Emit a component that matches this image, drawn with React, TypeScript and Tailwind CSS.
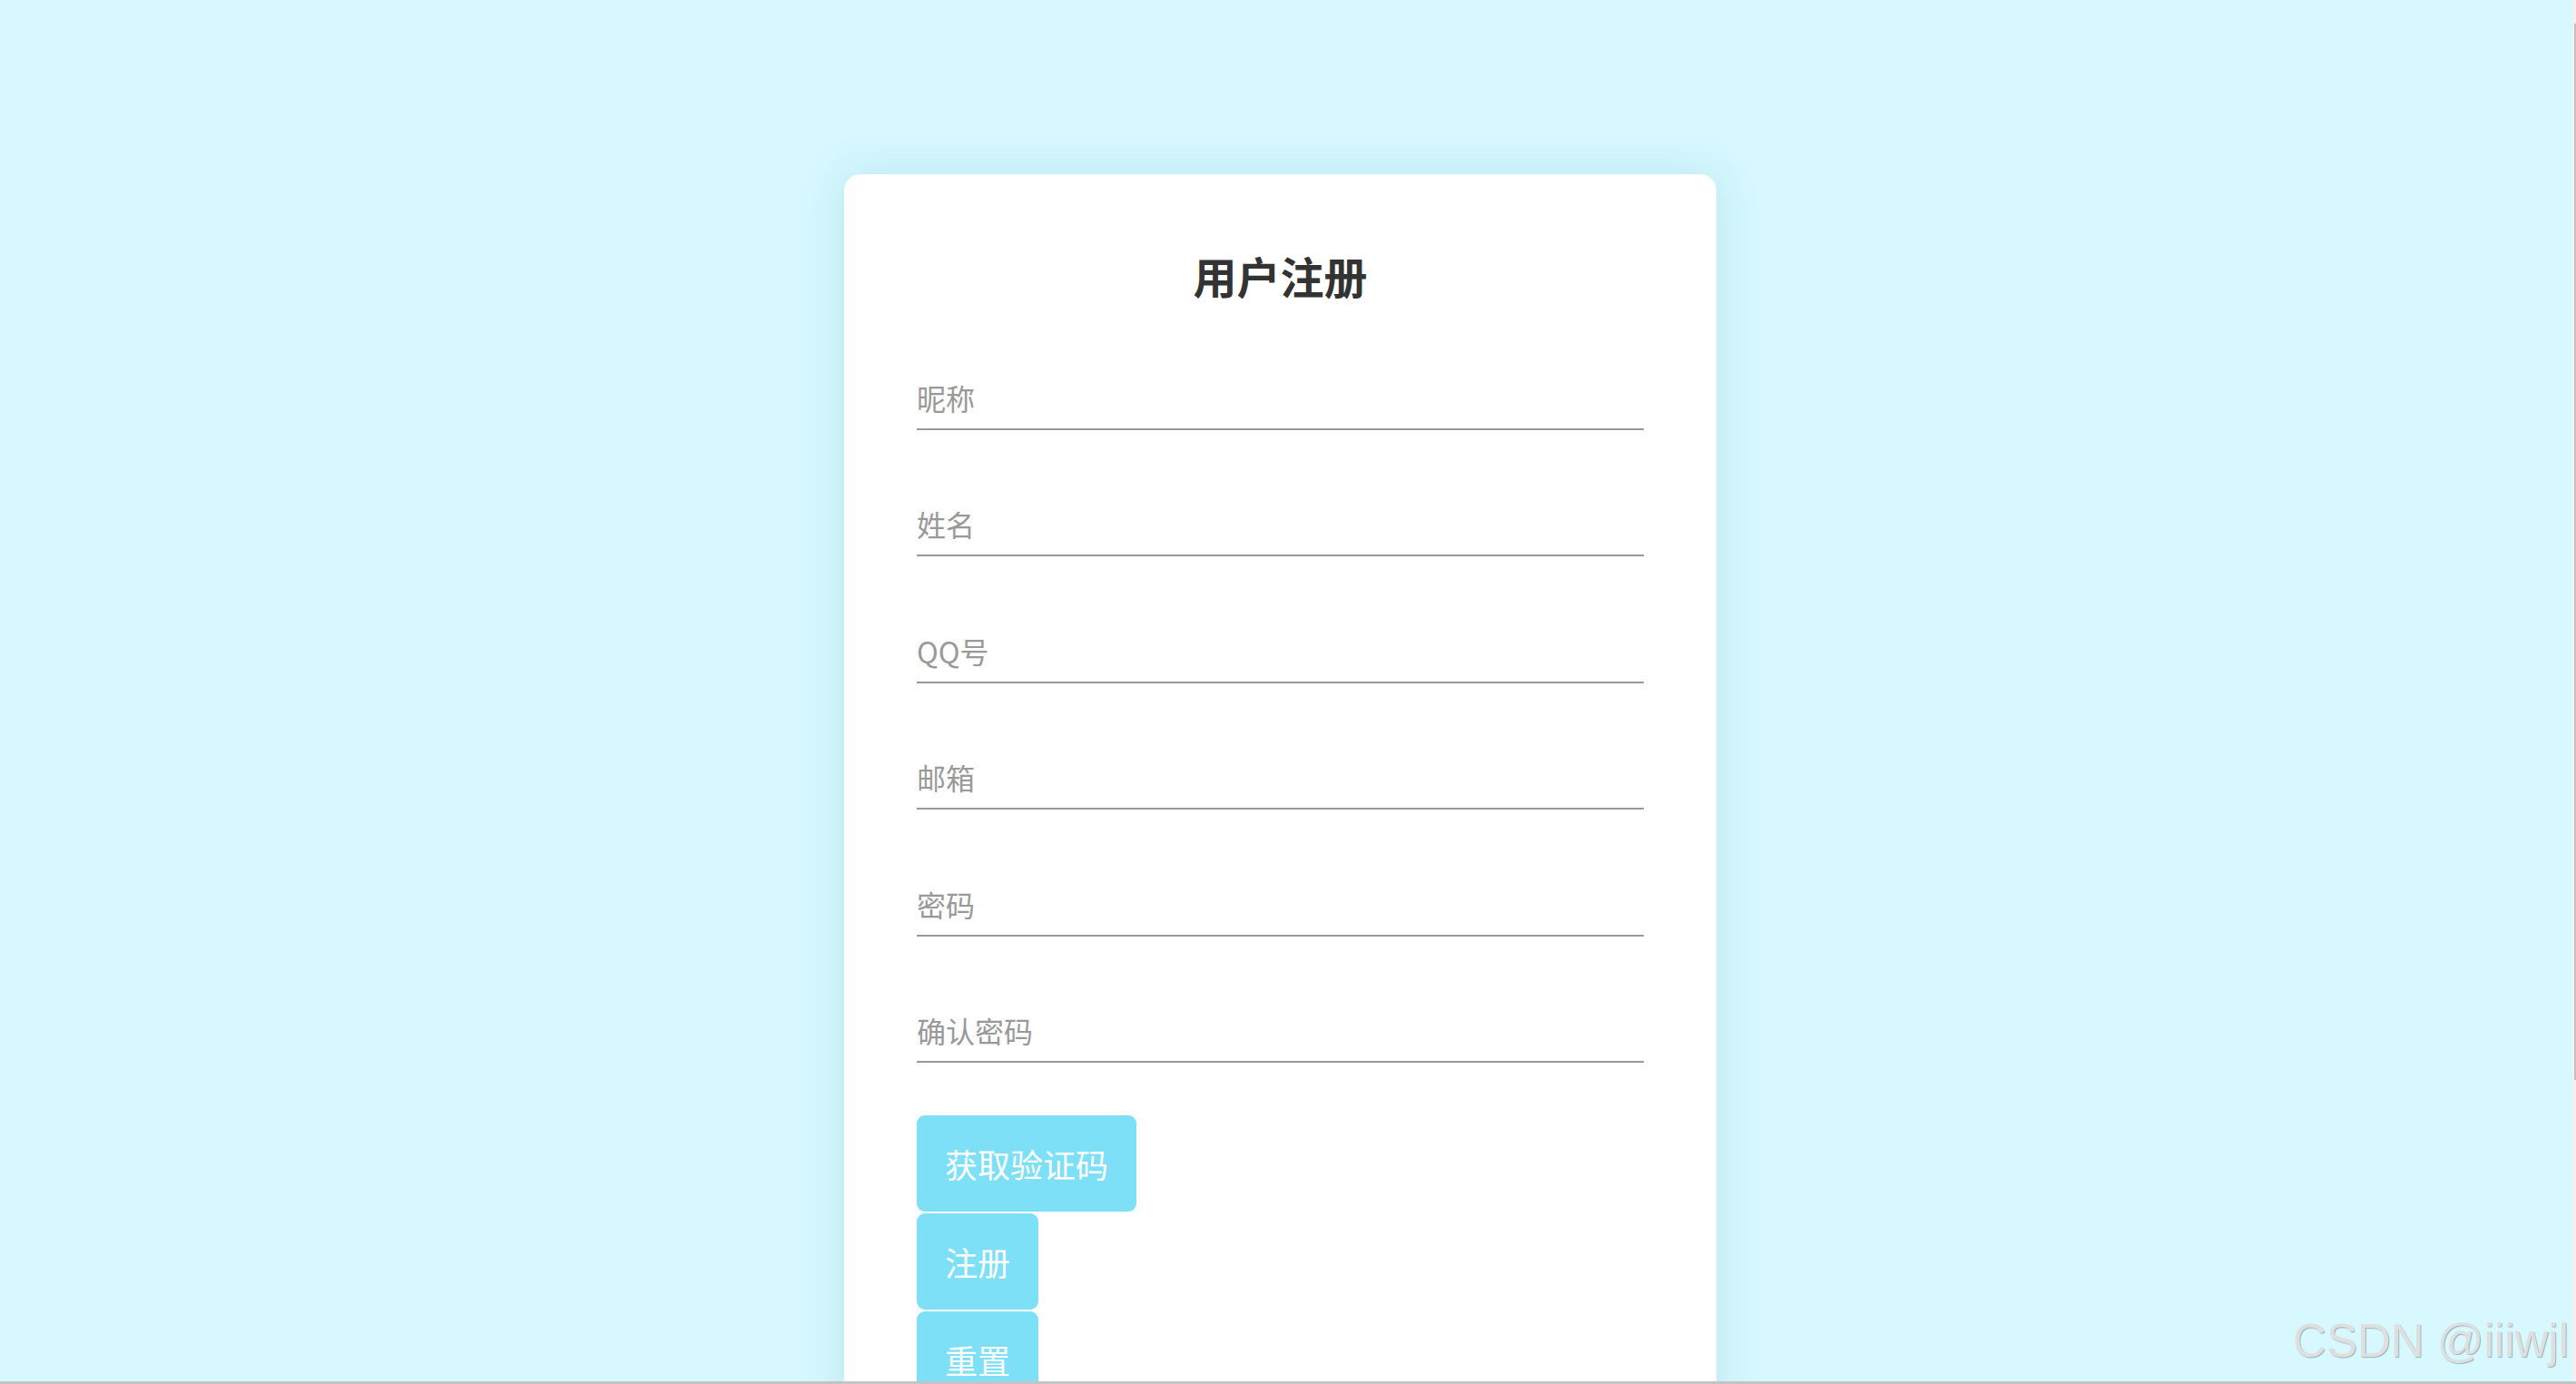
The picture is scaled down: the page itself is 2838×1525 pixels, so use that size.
import React from 'react';

const fields = ['昵称', '姓名', 'QQ号', '邮箱', '密码', '确认密码'];

const cjk = { fontFamily: '"Noto Sans CJK SC", "Noto Sans", sans-serif' };

export default function App() {
  return (
    <div className="relative flex h-screen w-full flex-col overflow-hidden bg-[#d6f8fe]" style={cjk}>
      <div className="flex min-h-0 flex-1">
        {/* page area */}
        <div className="flex min-w-0 flex-1 justify-center overflow-hidden pr-[13px] pt-[192px]">
          <div className="flex h-[1600px] w-[961px] shrink-0 flex-col rounded-[18px] bg-white px-[80px] pt-[75px] shadow-[0_0_50px_rgba(0,110,130,0.13)]">
            <h1 className="text-center text-[48px] font-bold leading-[72px] text-[#333]">用户注册</h1>

            <div className="mt-[67px] flex flex-col gap-[71.4px]">
              {fields.map(f => (
                <input
                  key={f}
                  type={f.includes('密码') ? 'password' : 'text'}
                  placeholder={f}
                  className="h-[68px] w-full border-b-2 border-[#999] bg-transparent pb-[2px] text-[32px] text-[#333] outline-none placeholder:text-[#999]"
                  style={cjk}
                />
              ))}
            </div>

            <div className="mt-[58px] flex flex-col items-start gap-[2px]">
              {['获取验证码', '注册', '重置'].map(b => (
                <button
                  key={b}
                  className="flex h-[106px] items-center rounded-[9px] bg-[#7ee0f7] px-[31px] text-[36px] text-white"
                  style={cjk}
                >
                  {b}
                </button>
              ))}
            </div>
          </div>
        </div>

        {/* scrollbar */}
        <div className="flex w-[4px] shrink-0 justify-end bg-[#f1f1f1] pt-[26px]">
          <div className="h-[1164px] w-[2px] bg-[#c1c1c1]" />
        </div>
      </div>
      <div className="h-[3px] w-full shrink-0 bg-[#c4c4c4]" />

      {/* watermark */}
      <div
        className="absolute right-[8px] top-[1452px] text-[51px] leading-none text-[#dfdfdf] [text-shadow:1px_1px_1px_rgba(0,0,0,0.28)]"
        style={{ fontFamily: '"Liberation Sans", Arial, sans-serif' }}
      >
        CSDN @iiiwjl
      </div>
    </div>
  );
}
